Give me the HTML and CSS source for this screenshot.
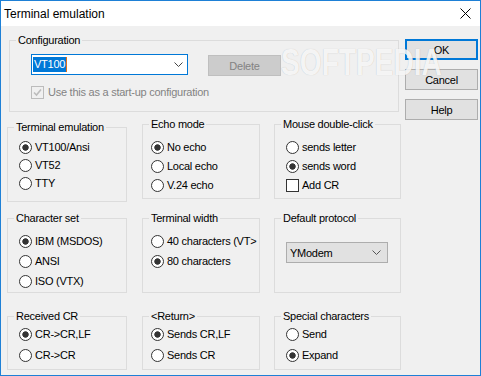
FILE: index.html
```
<!DOCTYPE html>
<html>
  <head>
    <meta charset="utf-8">
    <title>Terminal emulation</title>
    <link rel="stylesheet" href="styles.css">
  </head>
<body>

<div class="window">
  <div class="titlebar">
    <span class="title">Terminal emulation</span>
    <svg class="close" width="11" height="11" viewBox="0 0 11 11"><path d="M0.5 0.5L10.5 10.5M10.5 0.5L0.5 10.5" stroke="#000" stroke-width="1" fill="none"/></svg>
  </div>

  <div class="dialog">
    <div class="main">
      <fieldset class="group config">
        <legend>Configuration</legend>
        <div class="config-body">
          <div class="config-row">
            <div class="combo">
              <span class="combo-text"><span class="sel">VT100</span><span class="caret"></span></span>
              <svg class="chevron" width="9" height="5" viewBox="0 0 9 5"><path d="M0.5 0.5L4.5 4.5L8.5 0.5" stroke="#444" fill="none"/></svg>
            </div>
            <span class="btn btn-disabled">Delete</span>
          </div>
          <div class="option disabled">
            <span class="check on"><svg width="11" height="11" viewBox="0 0 11 11"><path d="M2 5.5L4.5 8L9 2.5" stroke="#bcbcbc" stroke-width="1.6" fill="none"/></svg></span>
            Use this as a start-up configuration
          </div>
        </div>
      </fieldset>

      <div class="groups">
        <!-- row 1 -->
        <fieldset class="group col1 row1 low">
          <legend>Terminal emulation</legend>
          <div class="options gap5">
            <div class="option"><span class="radio on"></span>VT100/Ansi</div>
            <div class="option"><span class="radio"></span>VT52</div>
            <div class="option"><span class="radio"></span>TTY</div>
          </div>
        </fieldset>
        <fieldset class="group col2 row1">
          <legend>Echo mode</legend>
          <div class="options">
            <div class="option"><span class="radio on"></span>No echo</div>
            <div class="option"><span class="radio"></span>Local echo</div>
            <div class="option"><span class="radio"></span>V.24 echo</div>
          </div>
        </fieldset>
        <fieldset class="group col3 row1">
          <legend>Mouse double-click</legend>
          <div class="options">
            <div class="option"><span class="radio"></span>sends letter</div>
            <div class="option"><span class="radio on"></span>sends word</div>
            <div class="option"><span class="check"></span>Add CR</div>
          </div>
        </fieldset>

        <!-- row 2 -->
        <fieldset class="group col1 row2">
          <legend>Character set</legend>
          <div class="options gap7">
            <div class="option"><span class="radio on"></span>IBM (MSDOS)</div>
            <div class="option"><span class="radio"></span>ANSI</div>
            <div class="option"><span class="radio"></span>ISO (VTX)</div>
          </div>
        </fieldset>
        <fieldset class="group col2 row2">
          <legend>Terminal width</legend>
          <div class="options gap7">
            <div class="option"><span class="radio"></span>40 characters (VT&gt;</div>
            <div class="option"><span class="radio on"></span>80 characters</div>
          </div>
        </fieldset>
        <fieldset class="group col3 row2">
          <legend>Default protocol</legend>
          <div class="options">
            <div class="select">
              <span>YModem</span>
              <svg class="chevron" width="9" height="5" viewBox="0 0 9 5"><path d="M0.5 0.5L4.5 4.5L8.5 0.5" stroke="#555" fill="none"/></svg>
            </div>
          </div>
        </fieldset>

        <!-- row 3 -->
        <fieldset class="group col1 row3">
          <legend>Received CR</legend>
          <div class="options gap8">
            <div class="option"><span class="radio on"></span>CR-&gt;CR,LF</div>
            <div class="option"><span class="radio"></span>CR-&gt;CR</div>
          </div>
        </fieldset>
        <fieldset class="group col2 row3">
          <legend>&lt;Return&gt;</legend>
          <div class="options gap8">
            <div class="option"><span class="radio on"></span>Sends CR,LF</div>
            <div class="option"><span class="radio"></span>Sends CR</div>
          </div>
        </fieldset>
        <fieldset class="group col3 row3">
          <legend>Special characters</legend>
          <div class="options gap8">
            <div class="option"><span class="radio"></span>Send</div>
            <div class="option"><span class="radio on"></span>Expand</div>
          </div>
        </fieldset>
      </div>
    </div>

    <div class="side">
      <span class="btn btn-default">OK</span>
      <span class="btn">Cancel</span>
      <span class="btn">Help</span>
    </div>
  </div>

  <div class="watermark">SOFTPEDIA</div>
</div>

</body></html>
```

FILE: styles.css
```
html, body {
  margin: 0;
  padding: 0;
}

body {
  font-family: "Liberation Sans", Arial, sans-serif;
  font-size: 11px;
  letter-spacing: -0.25px;
  color: #000;
  background: #f0f0f0;
}

.window {
  position: relative;
  width: 481px;
  height: 376px;
  box-sizing: border-box;
  border: 1px solid #1e80d6;
  background: #f0f0f0;
  overflow: hidden;
}

.titlebar {
  height: 25px;
  background: #fff;
  display: flex;
  align-items: center;
  justify-content: space-between;
  padding: 0 9px 0 3px;
}

.title {
  font-size: 12px;
  letter-spacing: 0;
}

.dialog {
  display: flex;
  align-items: flex-start;
  padding-top: 8px;
}

.main {
  padding-left: 6px;
}

/* group boxes */
.group {
  margin: 0;
  padding: 0;
  min-width: 0;
  border: 1px solid #dcdcdc;
  box-sizing: border-box;
}

.group legend {
  margin-left: 6px;
  padding: 0 2px;
  line-height: 13px;
  height: 13px;
}

.config {
  margin-left: 2px;
  width: 390px;
  height: 78px;
}

.config-body {
  padding: 7px 0 0 21px;
}

.config-row {
  display: flex;
  align-items: flex-start;
  gap: 20px;
  margin-bottom: 10px;
}

.combo {
  width: 157px;
  height: 21px;
  box-sizing: border-box;
  border: 1px solid #0078d7;
  background: #fff;
  display: flex;
  align-items: center;
  justify-content: space-between;
  padding: 0 4px 0 1px;
}

.combo-text {
  display: flex;
  align-items: center;
}

.sel {
  background: #0078d7;
  color: #fff;
  line-height: 15px;
  padding: 0 1px;
}

.caret {
  width: 1px;
  height: 15px;
  background: #e0701a;
}

.btn {
  display: flex;
  align-items: center;
  justify-content: center;
  width: 73px;
  height: 21px;
  box-sizing: border-box;
  border: 1px solid #adadad;
  background: #e1e1e1;
}

.btn-default {
  border: 2px solid #0078d7;
}

.btn-disabled {
  margin-top: 1px;
  background: #cccccc;
  border-color: #bfbfbf;
  color: #838383;
}

.side {
  display: flex;
  flex-direction: column;
  gap: 9px;
  margin: 5px 0 0 4px;
}

.groups {
  display: grid;
  grid-template-columns: 120px 118px 126px;
  column-gap: 15px;
  row-gap: 10px;
  margin-top: 6px;
}

.row1, .row2 {
  height: 81px;
}

.row3 {
  height: 60px;
  margin-top: 7px;
}

.row1.low {
  margin-top: 3px;
}

.col3 {
  margin-left: -1px;
}

.options {
  display: flex;
  flex-direction: column;
  gap: 6px;
  padding-top: 10px;
}

.col1 .options { padding-left: 11px; }
.col2 .options { padding-left: 8px; }
.col3 .options { padding-left: 11px; }

.options.gap5 {
  gap: 5px;
  padding-top: 7px;
}

.options.gap7 {
  gap: 7px;
}

.options.gap8 {
  gap: 8px;
  padding-top: 5px;
}

.option {
  display: flex;
  align-items: center;
  height: 13px;
  line-height: 13px;
  white-space: nowrap;
}

.option.disabled {
  color: #838383;
}

.radio {
  flex: none;
  width: 13px;
  height: 13px;
  box-sizing: border-box;
  border: 1px solid #333;
  border-radius: 50%;
  background: #fff;
  margin-right: 3px;
}

.radio.on {
  background: radial-gradient(circle, #333 0, #333 2.8px, #fff 3.6px);
}

.check {
  flex: none;
  width: 13px;
  height: 13px;
  box-sizing: border-box;
  border: 1px solid #333;
  background: #fff;
  margin-right: 3px;
  display: flex;
  align-items: center;
  justify-content: center;
}

.disabled .check {
  border-color: #bcbcbc;
  background: #f0f0f0;
  margin-right: 4px;
}

.select {
  margin-top: 7px;
  width: 102px;
  height: 21px;
  box-sizing: border-box;
  border: 1px solid #adadad;
  background: #e1e1e1;
  display: flex;
  align-items: center;
  justify-content: space-between;
  padding: 0 6px 0 3px;
}

.watermark {
  position: absolute;
  left: 280px;
  top: 43px;
  font-size: 37px;
  line-height: 37px;
  font-weight: bold;
  letter-spacing: 0;
  color: rgba(255, 255, 255, 0.85);
  text-shadow: 0 0 1px rgba(0, 0, 0, 0.22);
  transform: scaleX(0.76);
  transform-origin: left top;
  pointer-events: none;
}
```
